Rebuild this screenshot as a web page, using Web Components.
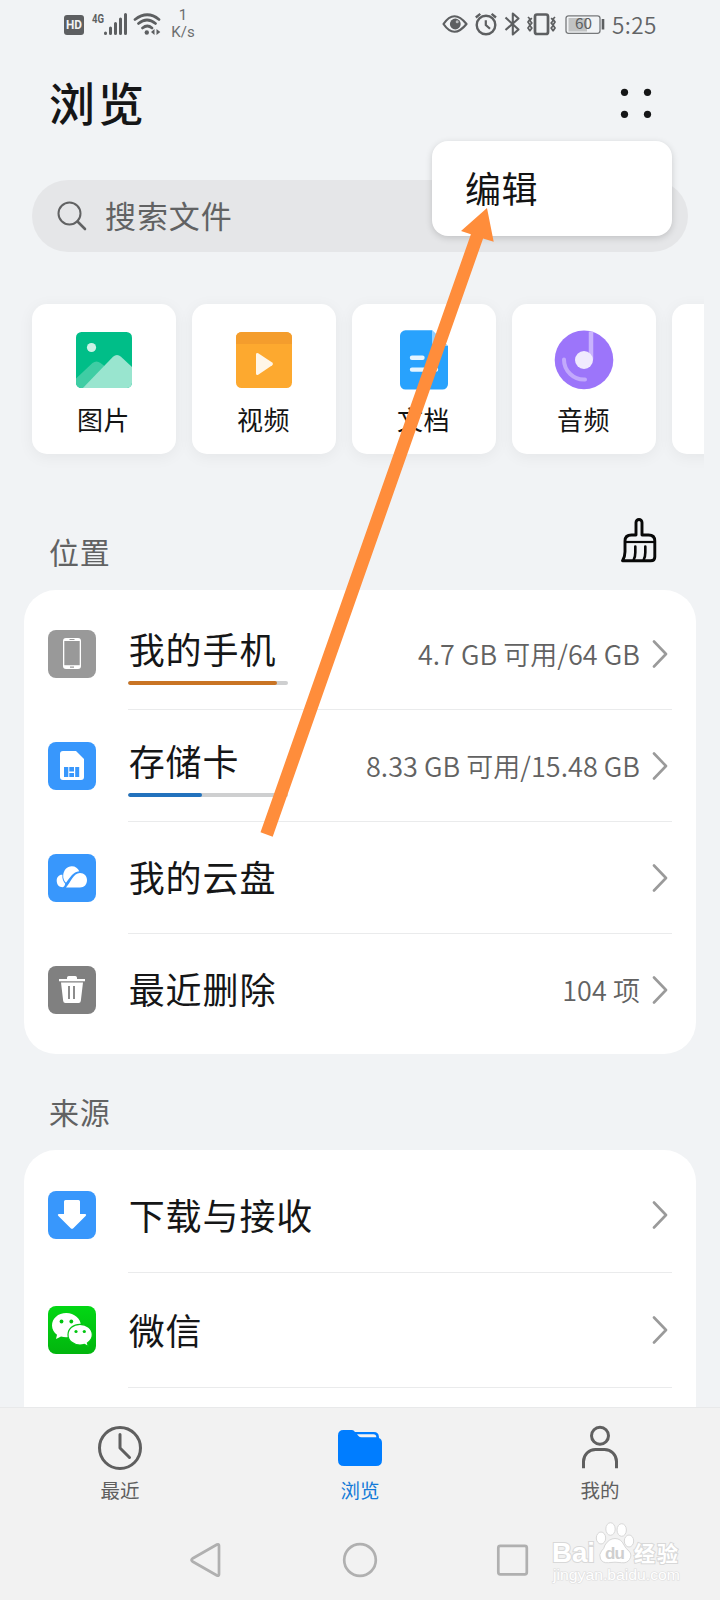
<!DOCTYPE html>
<html lang="zh-CN">
<head>
<meta charset="utf-8">
<title>浏览</title>
<style>
html,body{margin:0;padding:0}
body{width:720px;height:1600px;overflow:hidden;background:#f1f3f5;font-family:"Noto Sans CJK SC","Noto Sans",sans-serif}
</style>
</head>
<body>
<file-browser></file-browser>
<script>
function define(name, css, html) {
  customElements.define(name, class extends HTMLElement {
    constructor() {
      super();
      this.attachShadow({mode: 'open'});
    }
    connectedCallback() {
      const t = document.createElement('template');
      t.innerHTML = '<style>*{box-sizing:border-box}svg{display:block;flex:none}' + css + '</style>' + (typeof html === 'function' ? html(this) : html);
      this.shadowRoot.replaceChildren(t.content.cloneNode(true));
    }
  });
}

const svg = (w, h, body, extra = '') => `<svg width="${w}" height="${h}" viewBox="0 0 ${w} ${h}" fill="none" ${extra}>${body}</svg>`;

/* Icons for rows, tiles and tabs */
const ICONS = {
  phone: svg(48,48,`<rect width="48" height="48" rx="8" fill="#999"/><rect x="15" y="8" width="18" height="31" rx="3" fill="#fff"/><rect x="16.300" y="11" width="15.400" height="24.200" fill="#999"/><path d="M21.500 9.500h5M22 37.200h4" stroke="#999" stroke-width="1.200"/>`),
  sd: svg(48,48,`<rect width="48" height="48" rx="8" fill="#3897fc"/><path d="M15 9h13l8 8v18a3 3 0 0 1-3 3H15a3 3 0 0 1-3-3V12a3 3 0 0 1 3-3z" fill="#fff"/><path d="M16 25h4.300v10H16zM21.300 25h4.700v4.500h-4.700zM21.300 31h4.700v4h-4.700zM27.200 25h4v10h-4z" fill="#3897fc"/>`),
  cloud: svg(48,48,`<rect width="48" height="48" rx="8" fill="#3897fc"/><path d="M14.600 33.300C11 33.300 8.700 30.500 8.700 26.800s2.500-6.300 5.700-6c-.4 4.300 1 7 2.800 9-.4 2-.9 3-2.600 3.500z" fill="#fff"/><path d="M18 28.700c-2-2-3-4.300-2.800-7.500C15.700 16 19 12.200 23.800 12.200c3.600 0 6.300 2 7.400 5-6.300.7-8.500 5.600-13.200 11.500z" fill="#fff"/><path d="M18 33.500c5-5.300 7.200-14.500 14-14.500 4.200 0 7 3 7 7 0 4.500-2.600 7.500-7 7.500z" fill="#fff"/>`),
  trash: svg(48,48,`<rect width="48" height="48" rx="8" fill="#808080"/><path d="M11 13h8v-1.200q0-1.800 1.800-1.800h6.400q1.800 0 1.800 1.800V13h8v2.200H11zM13 16.500h22L32.800 35q-.2 2-2.200 2H17.400q-2 0-2.200-2z" fill="#fff"/><path d="M21 20v13M26 20v13" stroke="#808080" stroke-width="1.800"/>`),
  download: svg(48,48,`<rect width="48" height="48" rx="8" fill="#3897fc"/><path d="M17.500 9h13q1.500 0 1.500 1.500V23h5q2 .5.600 2L25.300 37.200q-1.300 1.200-2.600 0L10.400 25q-1.400-1.500.6-2h5V10.500Q16 9 17.500 9z" fill="#fff"/>`),
  wechat: svg(48,48,`<defs><linearGradient id="g" x2="0" y2="1"><stop stop-color="#02d714"/><stop offset="1" stop-color="#02b50e"/></linearGradient></defs><rect width="48" height="48" rx="8" fill="url(#g)"/><path d="M18.300 7C10 7 4 12.500 4 19.500c0 4 2 7 5 9.200L8 33l5-2.500c1.700.6 3.400.8 5.300.8 8 0 14.500-5.400 14.500-12S26.300 7 18.300 7z" fill="#fff"/><path d="M32 18.300c-6.800 0-12 4.600-12 10.400s5.200 10.300 12 10.300c1.600 0 3-.2 4.400-.7l4.100 2.200-1.100-3.600c3-2 4.900-4.900 4.900-8.200 0-5.800-5.500-10.400-12.300-10.400z" fill="#fff" stroke="#02c511" stroke-width="1.200"/><g fill="#02c511"><circle cx="13.500" cy="15.500" r="1.900"/><circle cx="23.300" cy="15.500" r="1.900"/><circle cx="28" cy="25.500" r="1.600"/><circle cx="36.300" cy="25.500" r="1.600"/></g>`),
  picture: svg(60,60,`<clipPath id="c"><rect x="2" y="2" width="56" height="56" rx="5.500"/></clipPath><g clip-path="url(#c)"><rect width="60" height="60" fill="#00be88"/><path d="M0 50.500 18.500 33q4-3 8 0l6 4.500L8 60H0z" fill="#3fcda4"/><path d="M7 60 39 26.700q4-3.500 8 0L60 39v21z" fill="#99e5cf"/><circle cx="17.500" cy="17.500" r="4.600" fill="#ccf2e6"/></g>`),
  video: svg(60,60,`<clipPath id="c"><rect x="2" y="2" width="56" height="56" rx="5.500"/></clipPath><g clip-path="url(#c)"><rect width="60" height="60" fill="#fda92f"/><rect width="60" height="14" fill="#f49d2d"/></g><path d="M22 24.300q.3-2 2.200-1l14 9.300q1.800 1.400 0 2.700l-14 9.400q-1.900 1-2.200-1z" fill="#fff6e8"/>`),
  doc: svg(60,60,`<path d="M11.500 .3H38l16 16v37.700a5.500 5.500 0 0 1-5.500 5.500h-37A5.500 5.500 0 0 1 6 54V5.800A5.500 5.500 0 0 1 11.500 .3z" fill="#28a2fd"/><path d="M38 .3 54 16H41.500Q38 16 38 12.500z" fill="#93d0fe"/><path d="M18 27.800h10.500M18 39.600h24" stroke="#e6f5ff" stroke-width="4.400" stroke-linecap="round"/>`),
  audio: svg(60,60,`<circle cx="30" cy="29.900" r="29.300" fill="#9c75fa"/><path d="M37 1.500v28" stroke="#c9b3fd" stroke-width="4.500"/><circle cx="30" cy="30" r="9" fill="#f0eafe"/><path d="M10 29.500A20 20 0 0 0 31 49.500" stroke="#c2a9fc" stroke-width="4" stroke-linecap="round"/>`),
  blank: svg(60,60,''),
  clock: svg(46,46,`<circle cx="23" cy="23" r="20.500" stroke="#5f5f5f" stroke-width="3"/><path d="M23 9.500V23l9.500 9.500" stroke="#5f5f5f" stroke-width="3" stroke-linecap="round" stroke-linejoin="round"/>`),
  folder: svg(46,46,`<path d="M6.500 5H15q1.700 0 3 2H37q4.500.2 4.900 4.500l.1 1.500q3 1.200 3 5v17q0 6-6 6H7q-6 0-6-6V10.500Q1 5 6.500 5z" fill="#007dff"/><path d="M20 9.300h16.300q3 0 3 3H24.500q-2 0-3-1.200z" fill="#f2f2f2"/>`),
  person: svg(46,46,`<circle cx="23" cy="10.700" r="8.500" stroke="#5f5f5f" stroke-width="3"/><path d="M6.500 43.300V36.500a12 12 0 0 1 12-12h9a12 12 0 0 1 12 12v6.800" stroke="#5f5f5f" stroke-width="3"/>`)
};

define('status-bar',
`:host{display:flex;height:48px;padding:0 65px 0 63px;align-items:flex-start;justify-content:space-between;color:#5d5f61}
.g{display:flex}.g>svg{margin-top:12px}
.rate{margin:7px 0 0 10px;width:24px;font:15px/17px Roboto,sans-serif;text-align:center;color:#6b6d6f}
.time{margin:10px 0 0 6px;font-size:22.5px;line-height:28px;width:43px;white-space:nowrap;letter-spacing:.4px;color:#626466;font-weight:350}`,
`<div class="g">
${svg(98,24,`<rect x="1" y="3" width="20" height="20" rx="3" fill="#5d5f61"/><text x="11" y="17.200" text-anchor="middle" font-family="Roboto" font-weight="700" font-size="12" textLength="16" lengthAdjust="spacingAndGlyphs" fill="#f1f3f5">HD</text><text x="29" y="11" font-family="Roboto" font-weight="700" font-size="12.500" textLength="12" lengthAdjust="spacingAndGlyphs" fill="#5d5f61">4G</text><path d="M42.500 21v.5M47.500 16v5.500M52.500 11.500v10M57.500 7v14.500M62.500 2.500v19" stroke="#5d5f61" stroke-width="3" stroke-linecap="round"/><path d="M72 7.500Q84.500-2 96 7.500M75.500 11.500q8.500-7 17 0M79.500 16q4.800-4 9.500 0" stroke="#5d5f61" stroke-width="2.700" stroke-linecap="round"/><circle cx="83.800" cy="20.500" r="2.200" fill="#5d5f61"/><path d="M91.500 17v6L88 20zM93.500 17v6L97.300 20z" fill="#5d5f61"/>`)}
<div class="rate">1<br>K/s</div></div>
<div class="g">
${svg(164,24,`<path d="M1.500 12Q12-3.500 24.500 12 12 27.500 1.500 12z" stroke="#5d5f61" stroke-width="2.200" stroke-linejoin="round"/><circle cx="13.300" cy="12" r="5.400" fill="#5d5f61"/><circle cx="15.200" cy="9.800" r="1.500" fill="#b9bbbd"/>
<circle cx="44" cy="13" r="9.300" stroke="#5d5f61" stroke-width="2.400"/><path d="M43.800 8.300V13l4.200 3.800" stroke="#5d5f61" stroke-width="2.200"/><path d="m33.800 5.500 4.500-3.700M54 5.500l-4.400-3.700" stroke="#5d5f61" stroke-width="2.300"/>
<path d="m63.500 5.500 13 12-5.700 5V1.500l5.700 5L63.500 18" stroke="#5d5f61" stroke-width="2.100" stroke-linejoin="round"/>
<rect x="93" y="2.500" width="13" height="19.500" rx="2" stroke="#5d5f61" stroke-width="2.700"/><path d="m86 5 2 2-2 3 2 3-2 3 2 3M89.800 6l-2 2.500 2 2.500-2 2.500 2 2.500-2 3M113 5l-2 2 2 3-2 3 2 3-2 3M109.200 6l2 2.500-2 2.500 2 2.500-2 2.500 2 3" stroke="#5d5f61" stroke-width="1.700"/>
<rect x="124" y="3.800" width="34" height="17.500" rx="2.500" stroke="#77797b" stroke-width="1.300"/><rect x="126.500" y="6" width="18.500" height="13.500" fill="#c1c3c4"/><path d="M161 7v10.500" stroke="#5d5f61" stroke-width="2.600"/><text x="141.500" y="17.400" text-anchor="middle" font-family="Noto Sans CJK SC" font-size="15" textLength="17" lengthAdjust="spacingAndGlyphs" fill="#5d5f61">60</text>`)}
<div class="time">5:25</div></div>`);

define('page-header',
`:host{display:flex;height:110px;align-items:center;justify-content:space-between;padding:0 68px 0 49px}
h1{margin:-5px 0 0;font-size:46px;letter-spacing:3px;line-height:60px;font-weight:500;color:#151617}`,
`<h1><slot></slot></h1>${svg(32,32,'<g fill="#151617"><circle cx="4.500" cy="5.300" r="3.600"/><circle cx="27.500" cy="5.300" r="3.600"/><circle cx="4.500" cy="27.300" r="3.600"/><circle cx="27.500" cy="27.300" r="3.600"/></g>')}`);

define('search-box',
`:host{display:flex;align-items:center;height:72px;margin:22px 32px 0;border-radius:36px;background:#e5e6e8;padding-left:25px;color:#616263;font-size:31px;line-height:40px;letter-spacing:.9px}
span{margin:-2px 0 0 18px}`,
`${svg(30,30,'<circle cx="12.500" cy="12.500" r="11" stroke="#616263" stroke-width="2"/><path d="m20.500 20.500 7.500 7.500" stroke="#616263" stroke-width="2.600" stroke-linecap="round"/>')}<span><slot></slot></span>`);

define('tile-strip',
`:host{display:flex;gap:16px;margin:36px 16px 0;padding:16px;height:182px;overflow:hidden}`,
`<slot></slot>`);

define('category-tile',
`:host{display:flex;flex:none;flex-direction:column;align-items:center;width:144px;height:150px;padding-top:26px;border-radius:15px;background:#fff;box-shadow:0 3px 16px rgba(0,0,0,.055);color:#141414}
div{font-size:26px;letter-spacing:.6px;line-height:34px;margin:12px 1px 0 0}`,
el => `${ICONS[el.getAttribute('icon')]}<div><slot></slot></div>`);

define('section-head',
`:host{display:flex;height:74px;margin-top:22px;padding:0 62px 0 49px;align-items:center;justify-content:space-between;color:#616263;font-size:30px;line-height:40px;letter-spacing:.8px}
:host([clean]){margin-top:46px}svg{margin-bottom:26px}span{margin-top:-4px}`,
el => `<span><slot></slot></span>` + (el.hasAttribute('clean') ? svg(38,46,`<path d="M16 18V5.500a3 3 0 0 1 6 0V18h6.500Q34.800 18 34.800 24v16q0 3.800-4 3.800H2.500q2.500-4 2.500-9V24Q5 18 11.500 18z" stroke="#080808" stroke-width="2.900" stroke-linejoin="round"/><path d="M6 25h28.500" stroke="#080808" stroke-width="2.200"/><path d="M15.300 29.500v6q0 4-1.500 7M25.300 29.500v6q0 4-1.500 7" stroke="#080808" stroke-width="2.600" stroke-linecap="round"/>`) : ''));

define('list-card',
`:host{display:block;margin:0 24px;padding:8px 24px;border-radius:32px;background:#fff}`,
`<slot></slot>`);

define('list-row',
`:host{display:flex;height:var(--row,112px);align-items:center;padding-bottom:var(--lift,0px)}
.main{flex:1;height:var(--row,112px);margin:0 0 calc(-1*var(--lift,0px)) 32px;display:flex;align-items:center;border-bottom:1px solid #eaebec;padding:1px 3px 0 0}
.main>svg{margin-bottom:var(--lift,0px)}
:host([last]) .main{border-color:transparent}
.name{flex:1;font-size:36px;letter-spacing:.9px;line-height:44px;color:#151617;white-space:nowrap;margin-top:-4px;text-indent:.7px}
.bar{width:160px;height:4px;border-radius:2px;background:#cecfd0;margin-top:11px;overflow:hidden;display:flex}
.bar i{border-radius:2px}
.metered .name{padding-top:7px}
.value{font-size:27px;line-height:36px;color:#626262;margin-right:12px;white-space:nowrap;letter-spacing:.05px;font-weight:350}`,
el => {
  const p = el.getAttribute('used');
  const bar = p ? `<div class="bar"><i style="width:${p}%;background:${el.getAttribute('tint')}"></i></div>` : '';
  return `${ICONS[el.getAttribute('icon')]}<div class="main ${p ? 'metered' : ''}"><div class="name"><slot></slot>${bar}</div><div class="value">${el.getAttribute('value') || ''}</div>${svg(17,28,'<path d="m2 1.500 12 12.500-12 12.500" stroke="#9a9a9a" stroke-width="2.600" stroke-linecap="round" stroke-linejoin="round"/>')}</div>`;
});

define('tab-item',
`:host{display:flex;flex:1;flex-direction:column;align-items:center;padding-top:17px;color:#5f5f5f}
:host([active]){color:#147bd8}
div{font-size:19.5px;line-height:28px;margin-top:5px}`,
el => `${ICONS[el.getAttribute('icon')]}<div><slot></slot></div>`);

define('tab-bar',
`:host{display:flex;height:103px;background:#f2f2f2;border-top:1px solid #e8e9ea;flex:none}`,
`<slot></slot>`);

define('system-nav',
`:host{display:flex;height:90px;background:#f2f2f2;justify-content:center;align-items:center;gap:118px;padding:10px 0 0}`,
`${svg(36,36,'<path d="M4.500 16.500 29 2.500q2-.9 2 1.200v28.600q0 2.100-2 1.200L4.500 19.500q-2-1.500 0-3z" stroke="#b0b0b0" stroke-width="2.700" stroke-linejoin="round"/>')}${svg(36,36,'<circle cx="18" cy="18" r="15.800" stroke="#b0b0b0" stroke-width="2.700"/>')}${svg(36,36,'<rect x="2.300" y="3.800" width="28.500" height="28.500" rx="2" stroke="#b0b0b0" stroke-width="2.700"/>')}`);

define('popup-menu',
`:host{position:absolute;left:432px;top:141px;width:240px;height:95px;border-radius:16px;background:#fff;box-shadow:0 2px 7px rgba(0,0,0,.16);display:flex;align-items:center;padding:0 0 4px 33px;font-size:36px;line-height:44px;letter-spacing:.6px;color:#141414}`,
`<slot></slot>`);

define('pointer-arrow',
`:host{position:absolute;left:0;top:0;pointer-events:none}`,
svg(720,900,'<path d="M260.500 832.300 470.900 234.300 461 231 487 208 493.700 241.700 483.100 238.500 272.700 836.700z" fill="#ff8d3b"/>'));

define('site-watermark',
`:host{position:absolute;left:548px;top:1518px}
text{paint-order:stroke;stroke:#d8d8d8;stroke-width:2px;fill:#fff}
.du{stroke:none;fill:#cfcfcf}
.url{stroke-width:1.200px;stroke:#dedede}`,
svg(140,70,`<text x="4" y="43.500" font-family="Liberation Sans" font-weight="700" font-size="27" textLength="43" lengthAdjust="spacingAndGlyphs">Bai</text>
<g fill="#fff" stroke="#d8d8d8"><ellipse cx="53" cy="20" rx="4.700" ry="6"/><ellipse cx="62.500" cy="11" rx="4.700" ry="6.300"/><ellipse cx="73.700" cy="12" rx="4.700" ry="6.300"/><ellipse cx="81" cy="23" rx="4.700" ry="6"/><path d="M57 27q4-6.500 10-6.500T76 27q2 4 5 6 3.500 4 .5 8.500-2.500 4-8 3.200-6.500-1-13 0-6 .6-8-3.700-2-4.500 1-8 2.500-2 3.500-6z"/></g>
<text class="du" x="57" y="41" font-family="Liberation Sans" font-weight="700" font-size="17" textLength="20">du</text>
<text x="86" y="43" font-family="Noto Sans CJK SC" font-weight="700" font-size="21" textLength="44">经验</text>
<text class="url" x="5" y="62" font-family="Liberation Sans" font-size="14" textLength="127" lengthAdjust="spacingAndGlyphs">jingyan.baidu.com</text>`, 'style="overflow:visible"'));

define('file-browser',
`:host{display:flex;flex-direction:column;position:relative;width:720px;height:1600px;overflow:hidden}
main{height:1407px;overflow:hidden;flex:none}
.sources{--row:115px;--lift:2px}`,
`<main>
<status-bar></status-bar>
<page-header>浏览</page-header>
<search-box>搜索文件</search-box>
<tile-strip>
<category-tile icon="picture">图片</category-tile><category-tile icon="video">视频</category-tile><category-tile icon="doc">文档</category-tile><category-tile icon="audio">音频</category-tile><category-tile icon="blank"></category-tile>
</tile-strip>
<section-head clean>位置</section-head>
<list-card>
<list-row icon="phone" value="4.7 GB 可用/64 GB" used="93" tint="#c97424">我的手机</list-row>
<list-row icon="sd" value="8.33 GB 可用/15.48 GB" used="46.300" tint="#2272bd">存储卡</list-row>
<list-row icon="cloud">我的云盘</list-row>
<list-row icon="trash" value="104 项" last>最近删除</list-row>
</list-card>
<section-head>来源</section-head>
<list-card class="sources">
<list-row icon="download">下载与接收</list-row>
<list-row icon="wechat">微信</list-row>
<div style="height:60px"></div>
</list-card>
</main>
<tab-bar><tab-item icon="clock">最近</tab-item><tab-item icon="folder" active>浏览</tab-item><tab-item icon="person">我的</tab-item></tab-bar>
<system-nav></system-nav>
<popup-menu>编辑</popup-menu>
<pointer-arrow></pointer-arrow>
<site-watermark></site-watermark>`);
</script>
</body>
</html>
